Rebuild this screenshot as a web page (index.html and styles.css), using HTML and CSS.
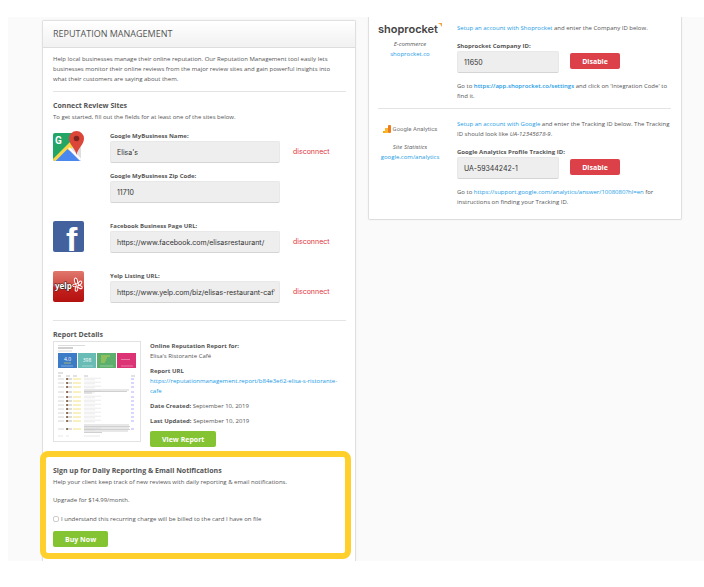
FILE: index.html
```html
<!DOCTYPE html>
<html lang="en">
  <head>
    <meta charset="UTF-8" />
    <meta name="viewport" content="width=device-width, initial-scale=1.0" />
    <title>Reputation Management</title>
    <link rel="stylesheet" href="styles.css">
  </head>
  <body>
    <main class="page">
      <!-- Reputation management -->
      <section class="card">
        <h1 class="card-title">REPUTATION MANAGEMENT</h1>
        <div class="card-body">
          <p class="intro">Help local businesses manage their online reputation. Our Reputation Management tool easily lets businesses monitor their online reviews from the major review sites and gain powerful insights into what their customers are saying about them.</p>
          <hr>
          <h2>Connect Review Sites</h2>
          <p>To get started, fill out the fields for at least one of the sites below.</p>

          <div class="sites">
            <div class="site">
              <svg class="site-icon" viewBox="0 0 31 31" aria-hidden="true">
                <defs>
                  <clipPath id="mapClip"><rect x="0" y="2" width="28" height="28" rx="2" /></clipPath>
                </defs>
                <g clip-path="url(#mapClip)">
                  <rect y="2" width="28" height="28" fill="#22a565" />
                  <path d="M28 5v25H2z" fill="#dedede" />
                  <path d="M14 17L27 30H1z" fill="#4a88f0" />
                  <path d="M-1 29L19 9l4 4L3 33z" fill="#f8d648" />
                  <path d="M14.500 18L27 30.500H2z" fill="#4a88f0" />
                  <path d="M16 17L30 31" stroke="#fff" stroke-width="2" />
                </g>
                <text class="g-mark" x="2" y="13">G</text>
                <path d="M23.500 24C22.500 17 16 14 16 7.500a7.500 7.500 0 0 1 15 0C31 14 24.500 17 23.500 24z" fill="#dc4639" />
                <circle cx="23.500" cy="7.500" r="2.800" fill="#7d2520" />
              </svg>
              <div class="fields">
                <div class="field">
                  <label for="gmbName">Google MyBusiness Name:</label>
                  <input type="text" id="gmbName" value="Elisa's">
                </div>
                <div class="field">
                  <label for="gmbZip">Google MyBusiness Zip Code:</label>
                  <input type="text" id="gmbZip" value="11710">
                </div>
              </div>
              <a class="disconnect" href="#">disconnect</a>
            </div>

            <div class="site">
              <svg class="site-icon" viewBox="0 0 31 31" aria-hidden="true">
                <rect width="31" height="31" rx="2" fill="#43619d" />
                <text class="f-mark" x="13" y="30">f</text>
              </svg>
              <div class="fields">
                <div class="field">
                  <label for="fbUrl">Facebook Business Page URL:</label>
                  <input type="text" id="fbUrl" value="https://www.facebook.com/elisasrestaurant/">
                </div>
              </div>
              <a class="disconnect" href="#">disconnect</a>
            </div>

            <div class="site">
              <svg class="site-icon" viewBox="0 0 31 31" aria-hidden="true">
                <defs>
                  <linearGradient id="yelpBg" x1="0" y1="0" x2="0" y2="1">
                    <stop offset="0" stop-color="#e0786d" />
                    <stop offset="0.480" stop-color="#d04a42" />
                    <stop offset="0.520" stop-color="#c52320" />
                    <stop offset="1" stop-color="#b31210" />
                  </linearGradient>
                </defs>
                <rect width="31" height="31" rx="2" fill="url(#yelpBg)" />
                <text class="yelp-mark" x="2" y="18">yelp</text>
                <g fill="#d3302b" stroke="#fff" stroke-width="1">
                  <ellipse cx="23" cy="10" rx="1.500" ry="3" transform="rotate(-12 23 10)" />
                  <ellipse cx="27" cy="12" rx="2.200" ry="1.300" transform="rotate(-50 27 12)" />
                  <ellipse cx="27" cy="16" rx="2.400" ry="1.300" transform="rotate(25 27 16)" />
                  <ellipse cx="23.500" cy="18" rx="1.300" ry="2.200" transform="rotate(10 23.500 18)" />
                  <ellipse cx="21.500" cy="14.500" rx="1.800" ry="1.200" />
                </g>
              </svg>
              <div class="fields">
                <div class="field">
                  <label for="yelpUrl">Yelp Listing URL:</label>
                  <input type="text" id="yelpUrl" value="https://www.yelp.com/biz/elisas-restaurant-caf%C3%A9">
                </div>
              </div>
              <a class="disconnect" href="#">disconnect</a>
            </div>
          </div>

          <hr>
          <h2>Report Details</h2>
          <div class="report">
            <svg class="report-thumb" viewBox="0 0 88 101" aria-hidden="true">
              <defs>
                <g id="row">
                  <path d="M5 0h6" stroke="#ccc" stroke-width=".8" />
                  <rect x="13" y="-1" width="1" height="2" fill="#c66" />
                  <rect x="14" y="-1" width="1" height="2" fill="#585" />
                  <path d="M15 0h4" stroke="#aaa" stroke-width=".8" />
                  <path d="M20 0h8" stroke="#f3e282" />
                  <path d="M31 -.8h17M31 .8h11" stroke="#ddd" stroke-width=".6" />
                  <path d="M78 0h3" stroke="#99f" stroke-width=".8" />
                </g>
              </defs>
              <rect x=".5" y=".5" width="87" height="100" fill="#fff" stroke="#e2e2e2" />
              <path d="M5 4.500h27M5 10h14" stroke="#ccc" stroke-width=".7" />
              <path d="M5 7h15" stroke="#888" stroke-width=".8" />
              <rect x="5" y="12" width="19" height="15" fill="#3c7cc6" />
              <rect x="25" y="12" width="18" height="15" fill="#68bcb5" />
              <rect x="44" y="12" width="19" height="15" fill="#5caf6c" />
              <rect x="64" y="12" width="19" height="15" fill="#dc3375" />
              <text class="thumb-num" x="14.500" y="20">4.0</text>
              <text class="thumb-num" x="34" y="21">398</text>
              <path d="M11 22h7" stroke="#c8cf60" stroke-width=".7" />
              <path d="M8 25h12M29 25h11M47 25h13M68 25h12M68 18.500h9" stroke="#fff" stroke-width=".7" opacity=".5" />
              <path d="M48 15h9M48 17h6M48 19h5M48 21h4" stroke="#d8d94a" stroke-width=".8" />
              <path d="M5 32h5M5 35h3M13 35h4M20 35h4M31 35h4M78 35h4" stroke="#aaa" stroke-width=".7" />
              <use href="#row" y="38" />
              <use href="#row" y="42" />
              <use href="#row" y="46" />
              <use href="#row" y="51" />
              <use href="#row" y="56" />
              <use href="#row" y="60" />
              <use href="#row" y="64" />
              <use href="#row" y="68" />
              <use href="#row" y="72" />
              <use href="#row" y="76" />
              <use href="#row" y="80" />
              <use href="#row" y="88" />
              <path d="M31 49h45M31 50.500h43M31 52h8M31 84h45M31 85.500h46M31 87h45M31 88.500h46M31 90h44M31 91.500h18" stroke="#bbb" stroke-width=".7" />
              <path d="M5 95h5M13 95h3M31 95h16" stroke="#ddd" stroke-width=".7" />
            </svg>
            <div class="report-info">
              <p><b>Online Reputation Report for:</b><br>Elisa's Ristorante Café</p>
              <p><b>Report URL</b><br><a href="#">https://reputationmanagement.report/b84e3e62-elisa-s-ristorante-cafe</a></p>
              <p><b>Date Created:</b> September 10, 2019</p>
              <p><b>Last Updated:</b> September 10, 2019</p>
              <button class="btn btn-green" type="button">View Report</button>
            </div>
          </div>

          <form class="signup">
            <h2>Sign up for Daily Reporting &amp; Email Notifications</h2>
            <p>Help your client keep track of new reviews with daily reporting &amp; email notifications.</p>
            <p class="price">Upgrade for $14.99/month.</p>
            <div class="agree">
              <input type="checkbox" id="agree">
              <label for="agree">I understand this recurring charge will be billed to the card I have on file</label>
            </div>
            <button class="btn btn-green" type="button">Buy Now</button>
          </form>
        </div>
      </section>

      <!-- Integrations -->
      <section class="card integrations">
        <div class="integration">
          <div class="brand">
            <div class="shoprocket-logo">shoprocket<svg viewBox="0 0 4 4" aria-hidden="true"><path d="M0 0h4v4L2.500 1.500z" fill="#f5a030" /></svg></div>
            <em>E-commerce</em>
            <a href="#">shoprocket.co</a>
          </div>
          <div class="setup">
            <p><a href="#">Setup an account with Shoprocket</a> and enter the Company ID below.</p>
            <div class="setup-row">
              <div class="field">
                <label for="shopId">Shoprocket Company ID:</label>
                <input type="text" id="shopId" value="11650">
              </div>
              <button class="btn btn-red" type="button">Disable</button>
            </div>
            <p>Go to <a class="strong-link" href="#">https://app.shoprocket.co/settings</a> and click on 'Integration Code' to find it.</p>
          </div>
        </div>
        <hr>
        <div class="integration">
          <div class="brand">
            <div class="ga-logo">
              <svg viewBox="0 0 8 8" aria-hidden="true">
                <path d="M0 6h2v2H0z" fill="#f9ab00" />
                <path d="M2 3h3v5H2z" fill="#fbb731" />
                <rect x="5" width="3" height="8" rx="1" fill="#ef7b1a" />
              </svg>
              <span>Google Analytics</span>
            </div>
            <em>Site Statistics</em>
            <a href="#">google.com/analytics</a>
          </div>
          <div class="setup">
            <p><a href="#">Setup an account with Google</a> and enter the Tracking ID below. The Tracking ID should look like <em>UA-12345678-9</em>.</p>
            <div class="setup-row">
              <div class="field">
                <label for="gaId">Google Analytics Profile Tracking ID:</label>
                <input type="text" id="gaId" value="UA-59344242-1">
              </div>
              <button class="btn btn-red" type="button">Disable</button>
            </div>
            <p>Go to <a href="#">https://support.google.com/analytics/answer/1008080?hl=en</a> for instructions on finding your Tracking ID.</p>
          </div>
        </div>
      </section>
    </main>
  </body>
</html>
```
FILE: styles.css
```css
* {
  box-sizing: border-box;
}

body {
  margin: 17px 0 26px 8px;
  font-family: "Open Sans", sans-serif;
  font-size: 6px;
  line-height: 10px;
  color: #555;
  background: #fff;
}

h1,
h2,
p {
  margin: 0;
}
a {
  color: #1a9be6;
  text-decoration: none;
}
hr {
  margin: 0;
  border: none;
  border-top: 1px solid #e4e4e4;
}
h2 {
  font-size: 7px;
  line-height: 12px;
  font-weight: bold;
}

.page {
  display: grid;
  grid-template-columns: 1fr 1fr;
  align-items: start;
  gap: 12px;
  padding: 0 22px 0 34px;
  background: #fafafa;
}

/* cards */
.card {
  min-width: 0;
  margin-top: 3px;
  background: #fff;
  border: 1px solid #e0e0e0;
  border-bottom: none;
  border-radius: 2px 2px 0 0;
  box-shadow: 0 0 2px #eee;
}
.card-title {
  padding: 0 10px;
  font-size: 9px;
  line-height: 26px;
  font-weight: normal;
  background: linear-gradient(#fff, #f1f1f1);
  border-bottom: 1px solid #ddd;
}
.card-body {
  padding: 6px 9px 2px 10px;
}
.card-body > hr {
  margin: 7px 0 8px;
}
.intro {
  padding-right: 12px;
}

/* inputs and buttons */
.field {
  display: flex;
  flex-direction: column;
}
.field label {
  font-weight: bold;
  white-space: nowrap;
}
.field input {
  width: 100%;
  height: 22px;
  padding: 0 4px 0 6px;
  font-family: Inter, sans-serif;
  font-size: 7px;
  color: #333;
  background: #eee;
  border: 1px solid #e8e8e8;
  border-bottom-color: #d4d4d4;
  border-radius: 2px;
}
.btn {
  height: 16px;
  padding: 0 12px;
  font-family: inherit;
  font-size: 7px;
  font-weight: bold;
  color: #fff;
  border: none;
  border-radius: 2px;
  cursor: pointer;
}
.btn-green {
  background: #84c331;
}
.btn-red {
  width: 50px;
  padding: 0;
  background: #dc4048;
}

/* review sites */
.sites {
  display: flex;
  flex-direction: column;
  gap: 18px;
  padding: 9px 0 10px;
}
.site {
  display: grid;
  grid-template-columns: 57px 1fr 66px;
}
.site-icon {
  width: 31px;
  height: 31px;
}
.fields {
  display: flex;
  flex-direction: column;
  gap: 8px;
}
.disconnect {
  padding: 16px 0 0 13px;
  font-family: Inter, sans-serif;
  font-size: 7px;
  color: #e0353d;
}
.g-mark {
  font: bold 10px Roboto, sans-serif;
  fill: #fff;
}
.f-mark {
  font: bold 34px "Liberation Sans", sans-serif;
  fill: #fff;
}
.yelp-mark {
  font: bold 8px "Open Sans", sans-serif;
  fill: #fff;
  stroke: #332222;
  stroke-width: 1px;
  paint-order: stroke;
}

/* report */
.report {
  display: flex;
  gap: 9px;
}
.report-thumb {
  flex: none;
  width: 88px;
  height: 101px;
}
.report-info {
  display: flex;
  flex-direction: column;
  align-items: flex-start;
  gap: 5px;
  min-width: 0;
}
.thumb-num {
  font: 5px "Open Sans", sans-serif;
  fill: #fff;
  text-anchor: middle;
}

/* daily reporting */
.signup {
  margin: 4px -5px 0 -13px;
  padding: 8px 7px 6px;
  background: #fff;
  border: 6px solid #ffd02b;
  border-radius: 8px;
}
.price {
  margin: 8px 0 9px;
}
.agree {
  display: flex;
  align-items: center;
  gap: 2px;
  margin-bottom: 7px;
}
.agree input {
  appearance: none;
  width: 6px;
  height: 6px;
  margin: 0;
  border: 1px solid #ccc;
  border-radius: 2px;
}

/* integrations */
.integrations {
  margin-top: 0;
  padding: 6px 10px 12px 9px;
  border-top: none;
  border-bottom: 1px solid #ddd;
  border-radius: 0 0 2px 2px;
}
.integration {
  display: grid;
  grid-template-columns: 64px 1fr;
  gap: 15px;
}
.integrations hr {
  margin: 7px 0 10px;
}
.brand {
  display: flex;
  flex-direction: column;
  align-items: center;
}
.shoprocket-logo {
  display: flex;
  margin-bottom: 4px;
  font: 600 11px/12px Inter, sans-serif;
  color: #444;
}
.shoprocket-logo svg {
  width: 4px;
  height: 4px;
}
.ga-logo {
  display: flex;
  align-items: center;
  gap: 2px;
  margin: 5px 0 8px;
  font-family: Roboto, sans-serif;
  color: #777;
  white-space: nowrap;
}
.ga-logo svg {
  width: 8px;
  height: 8px;
}
.strong-link {
  font-weight: 600;
}
.setup {
  display: flex;
  flex-direction: column;
  gap: 8px;
}
.setup-row {
  display: grid;
  grid-template-columns: 102px 50px;
  align-items: end;
  gap: 11px;
}
.setup-row .btn {
  margin-bottom: 4px;
}
```
